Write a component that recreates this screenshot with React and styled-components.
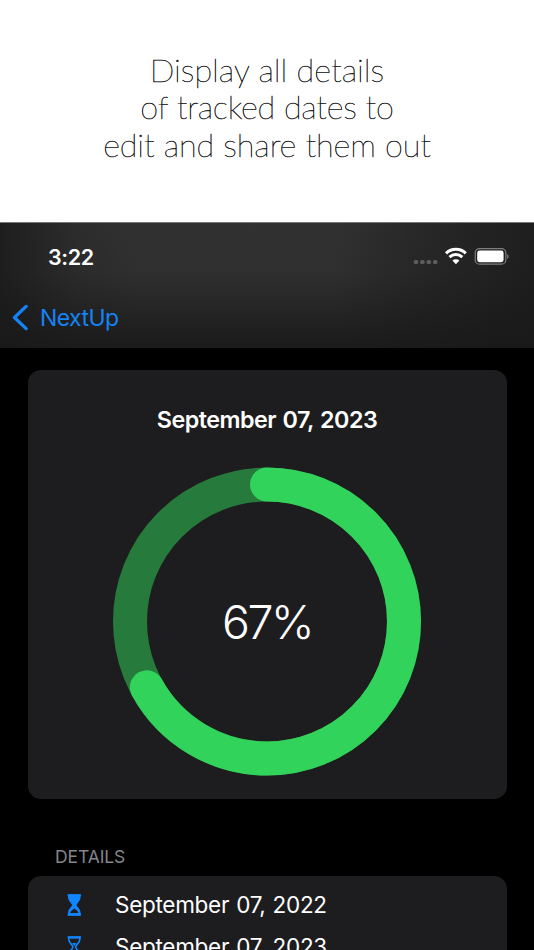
import React from "react";
import styled, { createGlobalStyle } from "styled-components";

const GlobalStyle = createGlobalStyle`
  * { box-sizing: border-box; }
  body { margin: 0; background: #fff; overflow: hidden; }
`;

const Page = styled.div`
  width: 534px;
  height: 950px;
  overflow: hidden;
  display: flex;
  flex-direction: column;
  background: #fff;
  font-family: Inter, "Liberation Sans", sans-serif;
`;

const Headline = styled.h1`
  margin: 0;
  height: 222px;
  flex: none;
  padding-top: 50.5px;
  display: flex;
  flex-direction: column;
  align-items: center;
  font-family: Lato, sans-serif;
  font-weight: 100;
  font-size: 32.5px;
  line-height: 37.5px;
  color: #000;
  -webkit-text-stroke: 0.45px #111;
`;

const HeadlineLine = styled.span`
  white-space: nowrap;
  letter-spacing: ${(p) => p.$spacing}px;
`;

const Screen = styled.main`
  flex: 1;
  min-height: 0;
  display: flex;
  flex-direction: column;
  background: #000;
`;

const Header = styled.header`
  height: 126px;
  flex: none;
  border-top: 1px solid #777;
  background:
    linear-gradient(90deg, rgba(24, 24, 24, 0.75) 0, rgba(24, 24, 24, 0.2) 14%, rgba(24, 24, 24, 0) 26%, rgba(24, 24, 24, 0) 62%, rgba(24, 24, 24, 0.4) 80%, rgba(24, 24, 24, 0.75) 100%),
    linear-gradient(180deg, #313131 0, #2f2f2f 40%, #252525 70%, #1b1b1b 100%);
`;

const StatusBar = styled.div`
  height: 67px;
  padding: 0 25px 0 48px;
  display: flex;
  align-items: center;
  justify-content: space-between;
`;

const Clock = styled.span`
  font-size: 21.5px;
  font-weight: 600;
  letter-spacing: -0.4px;
  color: #fff;
`;

const StatusIcons = styled.svg`
  width: 97px;
  height: 24px;
  display: block;
  margin-top: -1px;
`;

const BackButton = styled.button`
  display: flex;
  align-items: center;
  gap: 12px;
  height: 54px;
  padding: 0 0 0 12px;
  border: 0;
  background: none;
  color: #1583f5;
  font-family: inherit;
  font-size: 23px;
  letter-spacing: -0.55px;
`;

const BackLabel = styled.span`
  padding-top: 1px;
`;

const Chevron = styled.svg`
  width: 16px;
  height: 27px;
`;

const Card = styled.section`
  width: 479px;
  height: 428.5px;
  flex: none;
  margin: 22px 0 0 27.5px;
  padding-top: 34px;
  border-radius: 13px;
  background: #1d1d1f;
  display: flex;
  flex-direction: column;
  align-items: center;
`;

const CardTitle = styled.h2`
  margin: 0;
  font-size: 23.3px;
  line-height: 32px;
  font-weight: 600;
  letter-spacing: -0.5px;
  word-spacing: 1.2px;
  color: #fff;
  white-space: nowrap;
`;

const Gauge = styled.div`
  width: 308px;
  height: 309px;
  margin-top: 31px;
  display: grid;
  place-items: center;
  & > * { grid-area: 1 / 1; }
`;

const Percent = styled.span`
  font-size: 46.5px;
  font-weight: 300;
  letter-spacing: -2.6px;
  color: #fff;
`;

const SectionLabel = styled.h3`
  margin: 47.5px 0 0 55px;
  height: 30px;
  flex: none;
  line-height: 22px;
  font-size: 17.5px;
  font-weight: 400;
  letter-spacing: -0.1px;
  color: #85858a;
`;

const DetailList = styled.ul`
  width: 479px;
  flex: none;
  height: 110px;
  margin: 0 0 0 27.5px;
  padding: 8px 0 0 37px;
  border-radius: 13px;
  list-style: none;
  background: #1d1d1f;
`;

const DetailRow = styled.li`
  height: 41.5px;
  display: flex;
  align-items: flex-start;
  gap: 32.5px;
  font-size: 22.5px;
  line-height: 41px;
  letter-spacing: -0.28px;
  word-spacing: 1px;
  color: #fff;
  white-space: nowrap;
`;

const RowIcon = styled.svg`
  width: 18px;
  height: 24px;
  margin-top: 9px;
`;

const RowText = styled.span`
  display: block;
`;

const lines = [
  { text: "Display all details", spacing: 0 },
  { text: "of tracked dates to", spacing: -0.25 },
  { text: "edit and share them out", spacing: -0.1 },
];

const rows = [
  { date: "September 07, 2022", filled: true },
  { date: "September 07, 2023", filled: false },
];

const progress = 67;

function Ring({ value }) {
  const length = 2 * Math.PI * 137;
  return (
    <svg width="308" height="309" viewBox="0 -0.5 308 309" fill="none" strokeWidth="34">
      <circle cx="154" cy="154" r="137" stroke="#267a3c" />
      <circle
        cx="154"
        cy="154"
        r="137"
        stroke="#32d35b"
        strokeLinecap="round"
        strokeDasharray={`${(length * value) / 100} ${length}`}
        transform="rotate(-90 154 154)"
      />
    </svg>
  );
}

function Hourglass({ filled }) {
  return (
    <RowIcon viewBox="0 0 18 24" fill="none">
      <path
        d="M3.8 2.4H14.8V4.5C14.8 8 10.7 9.8 10.7 12S14.8 16 14.8 19.5V21.6H3.8V19.5C3.8 16 7.9 14.2 7.9 12S3.8 8 3.8 4.5Z"
        stroke="#1185fe"
        strokeWidth="1.6"
        strokeLinejoin="round"
        fill={filled ? "#1185fe" : "none"}
      />
      <path d="M3.5 2.3H15.1M3.5 21.7H15.1" stroke="#1185fe" strokeWidth="2.2" strokeLinecap="round" />
      {filled ? (
        <path d="M5.2 20C5.5 18 7.7 17 9.3 15.6C10.9 17 13.1 18 13.4 20Z" fill="#1d1d1f" />
      ) : (
        <path d="M7 8H11.6L9.3 11Z" fill="#1185fe" />
      )}
    </RowIcon>
  );
}

export default function App() {
  return (
    <Page>
      <GlobalStyle />
      <Headline>
        {lines.map((l) => (
          <HeadlineLine key={l.text} $spacing={l.spacing}>{l.text}</HeadlineLine>
        ))}
      </Headline>
      <Screen>
        <Header>
          <StatusBar>
            <Clock>3:22</Clock>
            <StatusIcons viewBox="412 244 97 24" fill="none">
              <g fill="#5c5c5c">
                <rect x="413.7" y="260" width="4.5" height="4" rx="1.6" />
                <rect x="420.1" y="260" width="4.5" height="4" rx="1.6" />
                <rect x="426.6" y="260" width="4.5" height="4" rx="1.6" />
                <rect x="433" y="260" width="4.5" height="4" rx="1.6" />
              </g>
              <g stroke="#fff" strokeWidth="3">
                <path d="M446 253.3A14.2 14.2 0 0 1 465.8 253.3" />
                <path d="M449.5 257.2A9.2 9.2 0 0 1 462.3 257.2" />
              </g>
              <path d="M452.4 260.6A5.1 5.1 0 0 1 459.4 260.6L455.9 264.2Z" fill="#fff" />
              <rect x="475.2" y="248.6" width="30.6" height="15.6" rx="4.3" stroke="#7d7d7d" strokeWidth="1.2" />
              <rect x="477.2" y="250.6" width="26.4" height="11.6" rx="2.4" fill="#fff" />
              <path d="M507.2 254V259C509 258.3 509 254.7 507.2 254Z" fill="#7d7d7d" />
            </StatusIcons>
          </StatusBar>
          <BackButton>
            <Chevron viewBox="0 0 16 27" fill="none">
              <path d="M14.1 2.4L2.5 13.5L14.1 24.6" stroke="#1583f5" strokeWidth="3.3" strokeLinecap="round" strokeLinejoin="round" />
            </Chevron>
            <BackLabel>NextUp</BackLabel>
          </BackButton>
        </Header>
        <Card>
          <CardTitle>September 07, 2023</CardTitle>
          <Gauge>
            <Ring value={progress} />
            <Percent>{progress}%</Percent>
          </Gauge>
        </Card>
        <SectionLabel>DETAILS</SectionLabel>
        <DetailList>
          {rows.map((r) => (
            <DetailRow key={r.date}>
              <Hourglass filled={r.filled} />
              <RowText>{r.date}</RowText>
            </DetailRow>
          ))}
        </DetailList>
      </Screen>
    </Page>
  );
}
